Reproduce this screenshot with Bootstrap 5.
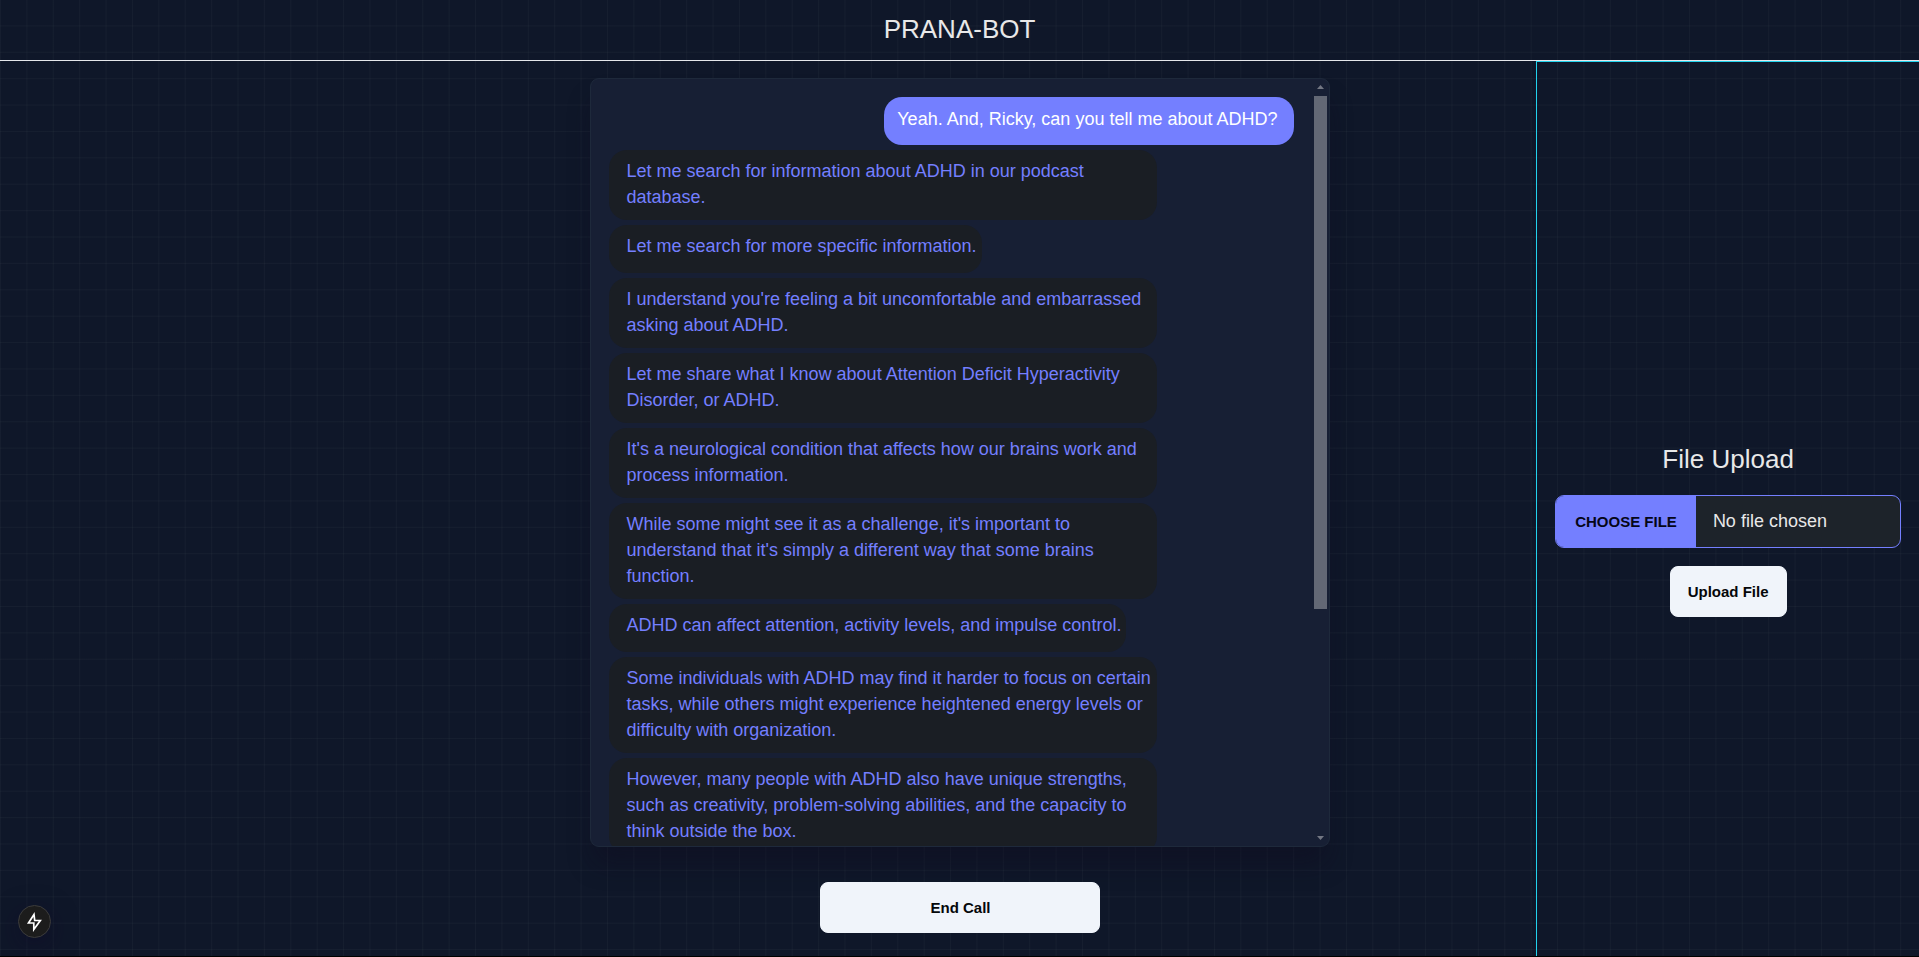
<!DOCTYPE html>
<html lang="en">
<head>
<meta charset="utf-8">
<meta name="viewport" content="width=device-width, initial-scale=1">
<title>PRANA-BOT</title>
<link href="https://cdn.jsdelivr.net/npm/bootstrap@5.3.0/dist/css/bootstrap.min.css" rel="stylesheet">
<style>
  :root { --accent: #747fff; --night: #0f1729; --line: #1e293b; --cyan: #22d3ee; }
  body { background: #000; color: #e8e8e8; font-family: "Liberation Sans", Arial, sans-serif; font-size: 18px; line-height: 26px; }
  .app {
    height: calc(100vh - 1px);
    background-color: var(--night);
    background-image:
      linear-gradient(rgba(240, 255, 240, .03) 1px, transparent 1px),
      linear-gradient(90deg, rgba(240, 255, 240, .03) 1px, transparent 1px);
    background-size: 1.65rem 1.65rem;
    background-position: 0 -1px;
  }
  .topbar { height: 61px; border-bottom: 1px solid #e5e7eb; padding-bottom: 2px; }
  .title { font-size: 26px; line-height: 36px; font-weight: 400; margin: 0; }
  .layout { display: grid; grid-template-columns: 1fr 3fr 1fr; min-height: 0; }
  .stage { grid-column: 2; padding: 17px 15px 23px 17px; gap: 35px; min-height: 0; }
  .chat { width: 100%; max-width: 740px; min-height: 0; background: #171f34; border: 1px solid var(--line); border-radius: 9px; box-shadow: 0 20px 26px -4px rgba(16, 10, 30, .4); }
  .messages { gap: 5px; padding: 18px 20px 18px 18px; overflow-y: auto; scrollbar-width: none; }
  .messages::-webkit-scrollbar { display: none; }
  .bubble { flex: none; min-height: 48px; max-width: 80%; padding: 8px 5px 10px 17px; border-radius: 18px; background: #1a1e24; color: var(--accent); }
  .bubble-user { padding: 9px 17px 9px 13px; background: var(--accent); color: #fff; }
  .track { width: 13px; margin-right: 2px; padding: 6px 0; }
  .thumb { height: 68%; margin-top: 7px; background: #636875; }
  .btn-light-solid { --bs-btn-font-size: 15px; --bs-btn-font-weight: 700; --bs-btn-line-height: 25px; --bs-btn-padding-y: 12px; --bs-btn-padding-x: 17px; --bs-btn-border-radius: 8px; --bs-btn-bg: #f0f4fa; --bs-btn-color: #050709; --bs-btn-border-color: #f0f4fa; --bs-btn-hover-bg: #dfe4ec; }
  .btn-call { width: 280px; }
  .side { margin-left: 1px; border-left: 1px solid var(--cyan); border-top: 1px solid var(--cyan); padding: 40px 18px 0; gap: 18px; }
  .file-box.form-control { height: 53px; padding: 0 16px 0 0; font-size: 18px; line-height: 51px; color: #e8e8e8; background: #1d232a; border-color: var(--accent); border-radius: 9px; }
  .file-box::file-selector-button, .file-box.form-control:hover:not(:disabled):not([readonly])::file-selector-button { margin: 0 17px 0 0; padding: 0 19px; height: 51px; border: 0; background: var(--accent); color: #050617; font-size: 15px; line-height: 51px; font-weight: 700; text-transform: uppercase; }
  .dev-badge { position: fixed; left: 18px; bottom: 19px; width: 33px; height: 33px; padding: 0; background: #1c1c1c; border: 1px solid #3c3c3c; box-shadow: 0 8px 26px rgba(16, 8, 40, .5); }
</style>
</head>
<body>
<div class="app d-flex flex-column">
  <header class="topbar d-flex flex-shrink-0 align-items-center justify-content-center">
    <h1 class="title">PRANA-BOT</h1>
  </header>
  <div class="layout flex-grow-1">
    <main class="stage d-flex flex-column align-items-center">
      <section class="chat d-flex flex-grow-1 overflow-hidden" aria-label="Conversation">
        <div class="messages d-flex flex-column align-items-start flex-grow-1">
          <div class="bubble bubble-user align-self-end">Yeah. And, Ricky, can you tell me about ADHD?</div>
          <div class="bubble">Let me search for information about ADHD in our podcast database.</div>
          <div class="bubble">Let me search for more specific information.</div>
          <div class="bubble">I understand you're feeling a bit uncomfortable and embarrassed asking about ADHD.</div>
          <div class="bubble">Let me share what I know about Attention Deficit Hyperactivity Disorder, or ADHD.</div>
          <div class="bubble">It's a neurological condition that affects how our brains work and process information.</div>
          <div class="bubble">While some might see it as a challenge, it's important to understand that it's simply a different way that some brains function.</div>
          <div class="bubble">ADHD can affect attention, activity levels, and impulse control.</div>
          <div class="bubble">Some individuals with ADHD may find it harder to focus on certain tasks, while others might experience heightened energy levels or difficulty with organization.</div>
          <div class="bubble">However, many people with ADHD also have unique strengths, such as creativity, problem-solving abilities, and the capacity to think outside the box.</div>
        </div>
        <div class="track d-flex flex-column align-items-center flex-shrink-0" aria-hidden="true">
          <svg class="flex-shrink-0" width="7" height="4"><path d="M0 4 3.500 0 7 4z" fill="#737783"/></svg>
          <div class="thumb w-100"></div>
          <svg class="flex-shrink-0 mt-auto" width="7" height="4"><path d="M0 0h7L3.500 4z" fill="#737783"/></svg>
        </div>
      </section>
      <button type="button" class="btn btn-light-solid btn-call">End Call</button>
    </main>
    <aside class="side d-flex flex-column align-items-center justify-content-center">
      <h2 class="title" id="upload-title">File Upload</h2>
      <input type="file" class="form-control file-box" aria-labelledby="upload-title">
      <button type="button" class="btn btn-light-solid">Upload File</button>
    </aside>
  </div>
</div>
<button type="button" class="dev-badge rounded-circle d-flex align-items-center justify-content-center" aria-label="Developer tools">
  <svg width="18" height="20" viewBox="0 0 18 20" fill="none" stroke="#fff" stroke-width="1.700"><path d="M8 2.500 2.500 11H7.800v6.500L14.300 8.500H8.700z"/></svg>
</button>
<script src="https://cdn.jsdelivr.net/npm/bootstrap@5.3.0/dist/js/bootstrap.bundle.min.js"></script>
</body>
</html>
